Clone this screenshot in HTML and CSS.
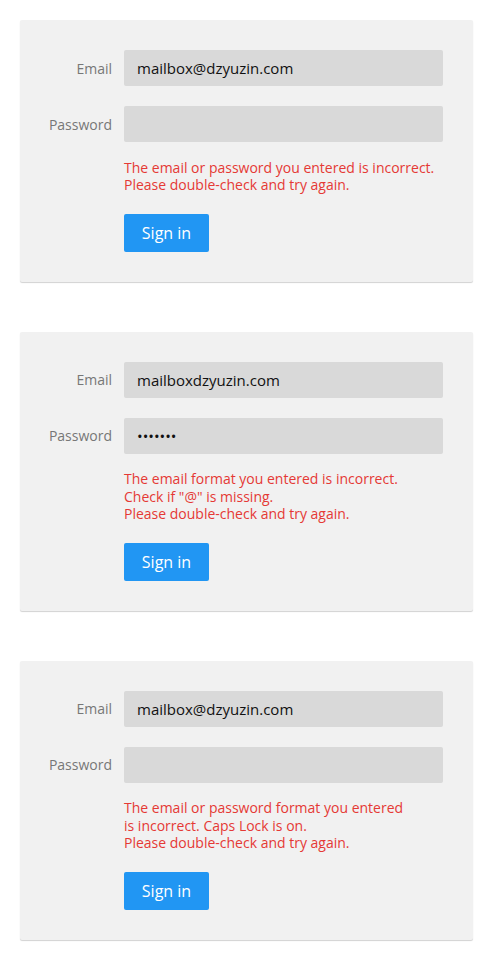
FILE: index.html
```html
<!DOCTYPE html>
<html lang="en">
<head>
    <meta charset="UTF-8">
    <meta name="viewport" content="width=device-width, initial-scale=1.0">
    <title>Sign in - error states</title>
    <link rel="stylesheet" href="styles.css">
</head>
<body>
    <main class="states">
        <!-- wrong credentials -->
        <form class="login-card">
            <div class="field-row">
                <label class="field-label">Email</label>
                <input type="text" class="field-input" value="mailbox@dzyuzin.com">
            </div>
            <div class="field-row">
                <label class="field-label">Password</label>
                <input type="password" class="field-input" value="">
            </div>
            <p class="error-text">
                The email or password you entered is incorrect.<br>
                Please double-check and try again.
            </p>
            <button type="button" class="signin-btn">Sign in</button>
        </form>

        <!-- missing @ -->
        <form class="login-card">
            <div class="field-row">
                <label class="field-label">Email</label>
                <input type="text" class="field-input" value="mailboxdzyuzin.com">
            </div>
            <div class="field-row">
                <label class="field-label">Password</label>
                <input type="password" class="field-input" value="1234567">
            </div>
            <p class="error-text">
                The email format you entered is incorrect.<br>
                Check if "@" is missing.<br>
                Please double-check and try again.
            </p>
            <button type="button" class="signin-btn">Sign in</button>
        </form>

        <!-- caps lock -->
        <form class="login-card">
            <div class="field-row">
                <label class="field-label">Email</label>
                <input type="text" class="field-input" value="mailbox@dzyuzin.com">
            </div>
            <div class="field-row">
                <label class="field-label">Password</label>
                <input type="password" class="field-input" value="">
            </div>
            <p class="error-text">
                The email or password format you entered<br>
                is incorrect. Caps Lock is on.<br>
                Please double-check and try again.
            </p>
            <button type="button" class="signin-btn">Sign in</button>
        </form>
    </main>
</body>
</html>
```

FILE: styles.css
```css
:root {
    --card-bg: #f1f1f1;
    --input-bg: #d9d9d9;
    --label-color: #777777;
    --error-color: #e53935;
    --primary-color: #2196f3;
}
body {
    margin: 0;
    padding: 0;
    background: #ffffff;
    font-family: 'Open Sans', 'Noto Sans', sans-serif;
}
.states {
    display: flex;
    flex-direction: column;
    gap: 50px;
    padding: 20px 21px 20px 20px;
}
/* card */
.login-card {
    display: flex;
    flex-direction: column;
    background: var(--card-bg);
    border-radius: 2px;
    box-shadow: 0 1px 1px rgba(0, 0, 0, 0.18);
    padding: 30px 30px 30px 104px;
    margin: 0;
}
.field-row {
    position: relative;
    display: flex;
    align-items: center;
    margin-bottom: 20px;
}
.field-row + .field-row {
    margin-bottom: 0;
}
.field-label {
    position: absolute;
    right: calc(100% + 12px);
    color: var(--label-color);
    font-size: 14px;
    white-space: nowrap;
}
.field-input {
    flex: 1;
    height: 36px;
    box-sizing: border-box;
    border: none;
    border-radius: 2px;
    background: var(--input-bg);
    padding: 0 13px;
    font-family: inherit;
    font-size: 15px;
    color: #111;
    outline: none;
}
.error-text {
    margin: 16.5px 0 20px;
    color: var(--error-color);
    font-size: 14px;
    line-height: 17.5px;
}
.signin-btn {
    align-self: flex-start;
    width: 85px;
    height: 38px;
    border: none;
    border-radius: 2px;
    background: var(--primary-color);
    color: #fff;
    font-family: inherit;
    font-size: 16px;
    cursor: pointer;
}
```
